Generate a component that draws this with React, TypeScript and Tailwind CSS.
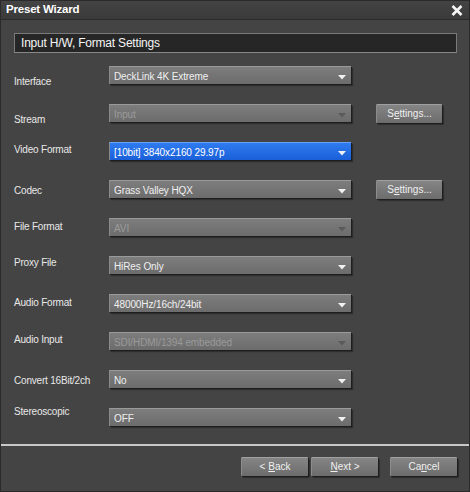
import React from 'react';

type Row = {
  label: string;
  value: string;
  disabled?: boolean;
  selected?: boolean;
  settings?: boolean;
  labelClass?: string;
};

const rows: Row[] = [
  { label: 'Interface', value: 'DeckLink 4K Extreme', labelClass: 'mt-[8px]' },
  { label: 'Stream', value: 'Input', disabled: true, settings: true, labelClass: 'mt-[8px]' },
  { label: 'Video Format', value: '[10bit] 3840x2160 29.97p', selected: true, labelClass: 'mt-[0px]' },
  { label: 'Codec', value: 'Grass Valley HQX', settings: true, labelClass: 'mt-[3px]' },
  { label: 'File Format', value: 'AVI', disabled: true, labelClass: 'mt-[1px]' },
  { label: 'Proxy File', value: 'HiRes Only', labelClass: '-mt-[1px]' },
  { label: 'Audio Format', value: '48000Hz/16ch/24bit', labelClass: 'mt-[1px]' },
  { label: 'Audio Input', value: 'SDI/HDMI/1394 embedded', disabled: true, labelClass: 'mt-[0px]' },
  { label: 'Convert 16Bit/2ch', value: 'No', labelClass: 'mt-[3px]' },
  { label: 'Stereoscopic', value: 'OFF', labelClass: '-mt-[4px]' },
];

function Arrow({ dim }: { dim?: boolean }) {
  return (
    <svg width="8" height="5" viewBox="0 0 8 5" className="shrink-0">
      <path d="M0 0 H8 L4 4.5 Z" fill={dim ? '#5a5a5a' : '#f2f2f2'} />
    </svg>
  );
}

function Select({ row }: { row: Row }) {
  const base = row.selected
    ? 'bg-gradient-to-b from-[#2f7bf0] to-[#1a5fd8] border-t-[#6aa0f5]'
    : 'bg-gradient-to-b from-[#7d7d7d] to-[#6c6c6c] border-t-[#9a9a9a]';
  const text = row.selected ? 'text-white' : row.disabled ? 'text-[#9a9a9a]' : 'text-[#f0f0f0]';
  return (
    <div
      className={`w-[242px] h-[18px] flex items-center justify-between pl-[4px] pr-[5px] border-t border-l border-l-[#8a8a8a] shadow-[1px_1px_0_#1e1e1e,2px_2px_1px_#2e2e2e] ${base}`}
    >
      <span className={`text-[10px] tracking-[-0.1px] leading-none pt-[2px] ${text}`}>{row.value}</span>
      <span className="pt-[3px]">
        <Arrow dim={row.disabled} />
      </span>
    </div>
  );
}

function Button({ children, w }: { children: React.ReactNode; w: string }) {
  return (
    <button
      className={`${w} h-[19px] bg-gradient-to-b from-[#858585] to-[#6c6c6c] border-t border-l border-t-[#a0a0a0] border-l-[#8c8c8c] shadow-[1px_1px_0_#1e1e1e,2px_2px_1px_#2e2e2e] rounded-[1px] text-[10px] text-[#f0f0f0] leading-none flex items-center justify-center`}
    >
      {children}
    </button>
  );
}

export default function App() {
  return (
    <div
      className="w-[470px] h-[492px] bg-[#444444] flex flex-col border border-[#2a2a2a]"
      style={{ fontFamily: '"Liberation Sans", Arial, sans-serif' }}
    >
      {/* title bar */}
      <div className="h-[19px] shrink-0 bg-gradient-to-b from-[#444] to-[#3a3a3a] border-b border-[#2b2b2b] flex items-center justify-between pl-[5px] pr-[6px]">
        <span className="text-[11.5px] font-bold text-white tracking-[-0.2px]">Preset Wizard</span>
        <svg width="12" height="11" viewBox="0 0 12 11">
          <path d="M1.5 1 L10.5 10 M10.5 1 L1.5 10" stroke="#f5f5f5" strokeWidth="2.6" />
        </svg>
      </div>

      <div className="flex-1 flex flex-col px-[13px] pt-[13px]">
        {/* section header */}
        <div className="h-[20px] w-[443px] shrink-0 bg-[#262626] border border-[#7a7a7a] border-b-[#888] flex items-center pl-[6px]">
          <span className="text-[12px] text-[#f5f5f5] tracking-[-0.2px]">Input H/W, Format Settings</span>
        </div>

        <div className="flex flex-col pt-[13px]">
          {rows.map((r, i) => (
            <div key={r.label} className={`flex items-start ${i === rows.length - 1 ? 'h-[36px]' : 'h-[38px]'}`}>
              <div className={`w-[95px] shrink-0 text-[10px] tracking-[-0.2px] text-[#e8e8e8] ${r.labelClass ?? ''}`}>
                {r.label}
              </div>
              <Select row={r} />
              {r.settings && (
                <div className="ml-[25px]">
                  <Button w="w-[66px]">
                    <span>
                      S<span className="underline">e</span>ttings...
                    </span>
                  </Button>
                </div>
              )}
            </div>
          ))}
        </div>
      </div>

      {/* footer */}
      <div className="shrink-0 h-[48px] border-t-2 border-t-[#c8c8c8] flex items-start justify-end pt-[11px] pr-[12px] gap-[3px]">
        <Button w="w-[67px]">
          &lt; <span className="underline ml-[3px]">B</span>ack
        </Button>
        <Button w="w-[67px]">
          <span className="underline">N</span>ext &gt;
        </Button>
        <div className="ml-[9px]">
          <Button w="w-[67px]">
            Ca<span className="underline">n</span>cel
          </Button>
        </div>
      </div>
    </div>
  );
}
